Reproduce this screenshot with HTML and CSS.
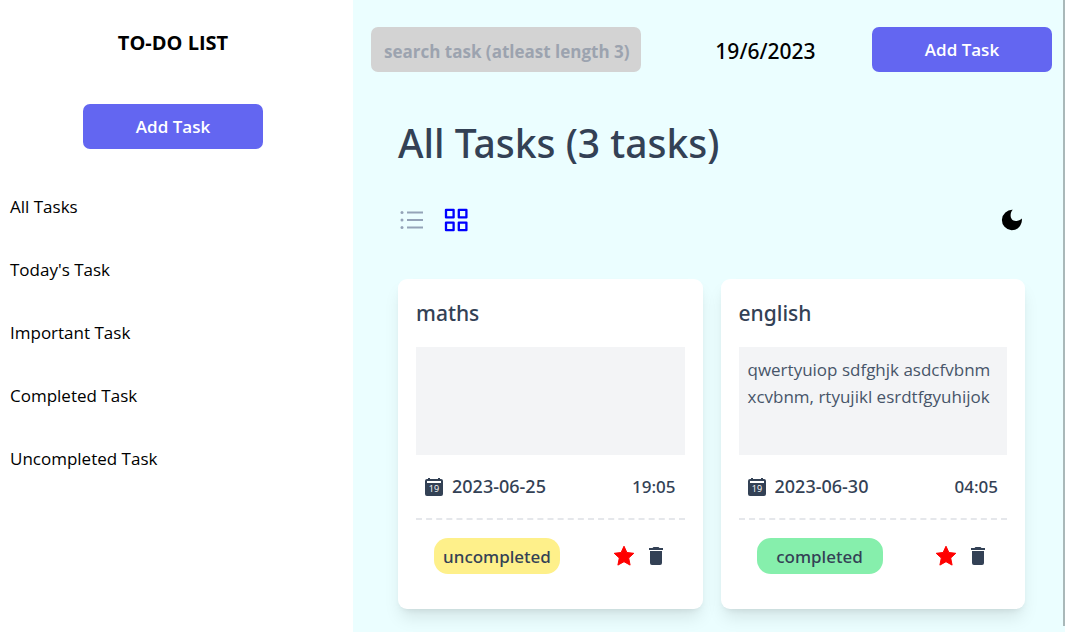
FILE: index.html
```html
<!DOCTYPE html>
<html lang="en">
<head>
<meta charset="utf-8">
<meta name="viewport" content="width=device-width, initial-scale=1">
<title>To-do list</title>
<link rel="stylesheet" href="styles.css">
</head>
<body>
<svg class="defs" aria-hidden="true">
  <symbol id="calendar" viewBox="0 0 18 18">
    <path fill="currentColor" fill-rule="evenodd" d="M3 0h2v1h8V0h2v1h1a2 2 0 0 1 2 2v13a2 2 0 0 1-2 2H2a2 2 0 0 1-2-2V3a2 2 0 0 1 2-2h1zM2 3v2h14V3z"/>
    <text x="9" y="14" text-anchor="middle" class="calendar-day">19</text>
  </symbol>
  <symbol id="star" viewBox="0 0 22 22">
    <path fill="currentColor" stroke="currentColor" stroke-width="1" stroke-linejoin="round" d="M11 1.200l2.900 6.300 6.900.8-5.100 4.700 1.400 7.100-6.100-3.400-6.100 3.400 1.400-7.100L1.200 8.300l6.900-.8z"/>
  </symbol>
  <symbol id="trash" viewBox="0 0 14 18">
    <path fill="currentColor" d="M0 1h3.500l1-1h5l1 1H14v2H0zM1 4h12v12a2 2 0 0 1-2 2H3a2 2 0 0 1-2-2z"/>
  </symbol>
</svg>
<div class="app">
  <aside class="sidebar">
    <h1 class="brand">TO-DO LIST</h1>
    <button class="button" type="button">Add Task</button>
    <nav class="nav">
      <a href="#all">All Tasks</a>
      <a href="#today">Today's Task</a>
      <a href="#important">Important Task</a>
      <a href="#completed">Completed Task</a>
      <a href="#uncompleted">Uncompleted Task</a>
    </nav>
  </aside>
  <main class="main">
    <header class="topbar">
      <input class="search" type="text" aria-label="Search task" placeholder="search task (atleast length 3)">
      <time class="today" datetime="2023-06-19">19/6/2023</time>
      <button class="button" type="button">Add Task</button>
    </header>
    <section class="content">
      <h2 class="heading">All Tasks (3 tasks)</h2>
      <div class="toolbar">
        <button class="icon-button list-view" type="button" aria-label="List view">
          <svg width="27" height="27" viewBox="0 0 27 27" fill="currentColor"><path d="M9 4.500h16v2H9zM9 12h16v2H9zM9 19.500h16v2H9z"/><circle cx="4" cy="5.500" r="1.500"/><circle cx="4" cy="13" r="1.500"/><circle cx="4" cy="20.500" r="1.500"/></svg>
        </button>
        <button class="icon-button grid-view" type="button" aria-label="Grid view">
          <svg width="27" height="27" viewBox="0 0 27 27" fill="none" stroke="currentColor" stroke-width="2.300" stroke-linejoin="round"><path d="M3 2.800h7.600v7.600H3zM15.800 2.800h7.600v7.600h-7.600zM3 15.600h7.600v7.600H3zM15.800 15.600h7.600v7.600h-7.600z"/></svg>
        </button>
        <button class="icon-button theme" type="button" aria-label="Dark mode">
          <svg width="27" height="27" viewBox="0 0 27 27" fill="currentColor"><path d="M14.800 2.800C11.300 6 11.800 13.900 17.800 13.900C20.300 13.900 22.300 13.200 23.900 11.500C24.400 18 19.800 23.300 13.600 23.300A10.250 10.250 0 0 1 14.800 2.800z"/></svg>
        </button>
      </div>
      <div class="cards">
        <article class="card">
          <h3 class="card-title">maths</h3>
          <p class="description"></p>
          <div class="schedule">
            <svg class="calendar" aria-hidden="true"><use href="#calendar"/></svg>
            <span class="date">2023-06-25</span>
            <span class="hour">19:05</span>
          </div>
          <div class="actions">
            <button class="status pending" type="button">uncompleted</button>
            <button class="icon-button star" type="button" aria-label="Important"><svg width="22" height="22"><use href="#star"/></svg></button>
            <button class="icon-button" type="button" aria-label="Delete"><svg width="14" height="18"><use href="#trash"/></svg></button>
          </div>
        </article>
        <article class="card">
          <h3 class="card-title">english</h3>
          <p class="description">qwertyuiop sdfghjk asdcfvbnm xcvbnm, rtyujikl esrdtfgyuhijok</p>
          <div class="schedule">
            <svg class="calendar" aria-hidden="true"><use href="#calendar"/></svg>
            <span class="date">2023-06-30</span>
            <span class="hour">04:05</span>
          </div>
          <div class="actions">
            <button class="status done" type="button">completed</button>
            <button class="icon-button star" type="button" aria-label="Important"><svg width="22" height="22"><use href="#star"/></svg></button>
            <button class="icon-button" type="button" aria-label="Delete"><svg width="14" height="18"><use href="#trash"/></svg></button>
          </div>
        </article>
      </div>
    </section>
  </main>
  <div class="scroll-thumb"></div>
</div>
</body>
</html>
```
FILE: styles.css
```css
* {
  box-sizing: border-box;
}

body,
h1,
h2,
h3,
p {
  margin: 0;
}

body {
  background: #ebfeff;
  color: #000;
  font: 400 17px/27px "Noto Sans", "Open Sans", sans-serif;
}

button,
input {
  font: inherit;
}

button {
  border: 0;
  cursor: pointer;
}

svg {
  display: block;
}

.defs {
  display: none;
}

.app {
  display: grid;
  grid-template-columns: 353fr 710fr 2px;
  min-height: 100vh;
}

.sidebar {
  display: flex;
  flex-direction: column;
  align-items: center;
  padding: 29px 7px 0 0;
  background: #fff;
}

.brand {
  margin-bottom: 48px;
  font-family: "Open Sans", sans-serif;
  font-size: 20px;
  font-weight: 700;
}

.button {
  width: 180px;
  height: 45px;
  padding: 0;
  border-radius: 7px;
  background: #6366f1;
  color: #fff;
  font-family: "Open Sans", sans-serif;
  font-weight: 600;
}

.nav {
  display: flex;
  flex-direction: column;
  gap: 36px;
  width: 100%;
  margin-top: 44px;
  padding-left: 10px;
}

.nav a {
  color: inherit;
  font-family: "Open Sans", sans-serif;
  text-decoration: none;
}

.topbar {
  display: flex;
  align-items: center;
  justify-content: space-between;
  padding: 27px 11px 0 18px;
}

.search {
  width: 270px;
  height: 45px;
  padding: 4px 8px 0 13px;
  border: 0;
  border-radius: 7px;
  background: #d3d3d3;
  font-family: "Open Sans", sans-serif;
  font-weight: 700;
}

.search::placeholder {
  color: #9ca3af;
  opacity: 1;
}

.today {
  margin-left: 18px;
  padding-top: 3px;
  font-size: 21px;
  font-weight: 500;
}

.content {
  padding: 44px 38px 23px 45px;
  color: #334155;
}

.heading {
  font-size: 39px;
  font-weight: 500;
  line-height: 54px;
}

.toolbar {
  display: flex;
  gap: 18px;
  padding: 37px 0 45px;
}

.icon-button {
  padding: 0;
  background: none;
  color: inherit;
}

.list-view {
  color: #94a3b8;
}

.grid-view {
  color: #00f;
}

.theme {
  margin-left: auto;
  color: #000;
}

.cards {
  display: grid;
  grid-template-columns: 1fr 1fr;
  gap: 18px;
}

.card {
  min-height: 330px;
  padding: 18px;
  border-radius: 9px;
  background: #fff;
  box-shadow: 0 11px 17px -3px rgba(0, 0, 0, 0.1), 0 4px 7px -4px rgba(0, 0, 0, 0.1);
}

.card-title {
  margin-bottom: 18px;
  font-size: 21px;
  font-weight: 500;
  line-height: 32px;
}

.description {
  height: 108px;
  padding: 9px;
  background: #f3f4f6;
  color: #475569;
  font-family: "Open Sans", sans-serif;
}

.schedule {
  display: flex;
  align-items: center;
  gap: 9px;
  height: 65px;
  padding: 0 9px;
  border-bottom: 2px dashed #e5e7eb;
  font-weight: 500;
}

.calendar {
  width: 18px;
  height: 18px;
}

.calendar-day {
  fill: #fff;
  font: 400 9px "Open Sans", sans-serif;
}

.date {
  font-size: 18px;
}

.hour {
  margin-left: auto;
}

.actions {
  display: flex;
  align-items: center;
  gap: 14px;
  padding: 18px 22px 0 18px;
}

.status {
  width: 126px;
  height: 36px;
  padding: 0;
  border-radius: 14px;
  color: #334155;
  font-weight: 500;
}

.pending {
  background: #fef08a;
}

.done {
  background: #86efac;
}

.star {
  margin-left: auto;
  color: #f00;
}

.scroll-thumb {
  height: 99vh;
  background: #a9b8b9;
}
```
